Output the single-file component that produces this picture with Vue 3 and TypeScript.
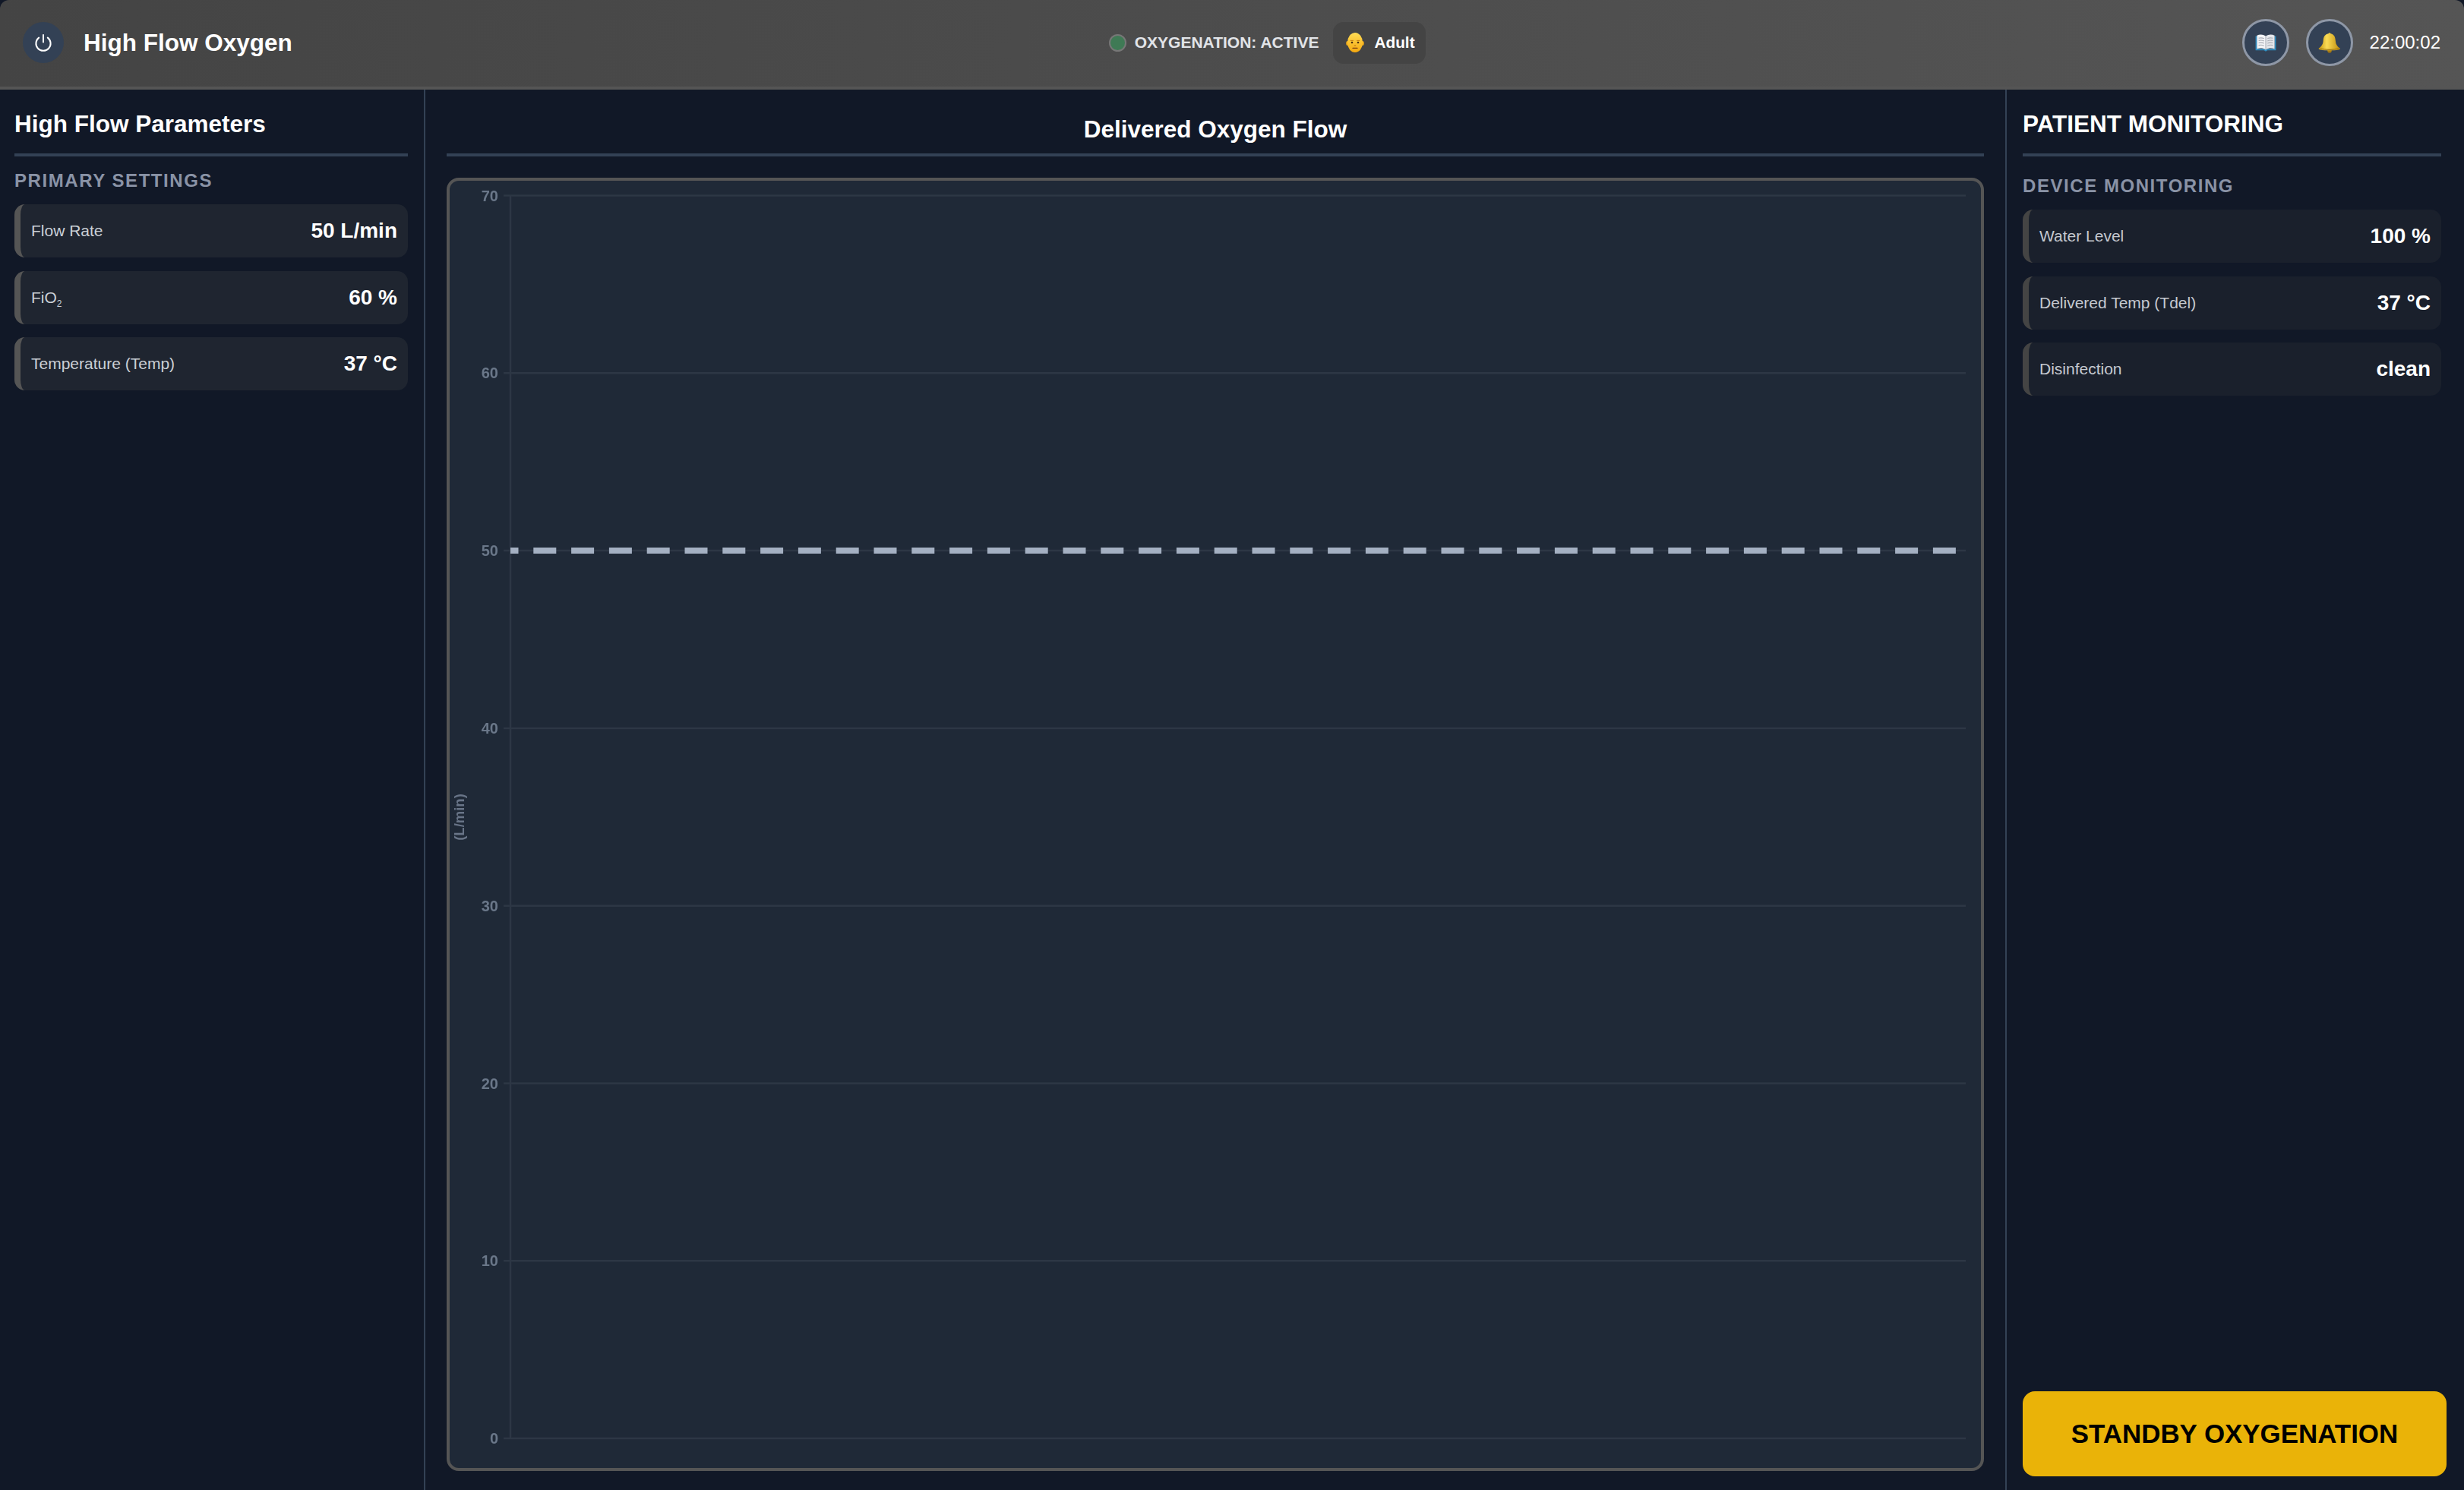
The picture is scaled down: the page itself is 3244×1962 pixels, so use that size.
<script setup lang="ts">
// High flow oxygen screen: header, parameter panel, flow chart, monitoring panel.
const primary = [
  { label: 'Flow Rate', value: '50 L/min' },
  { label: 'FiO', sub: '2', value: '60 %' },
  { label: 'Temperature (Temp)', value: '37 °C' },
]

const monitoring = [
  { label: 'Water Level', value: '100 %' },
  { label: 'Delivered Temp (Tdel)', value: '37 °C' },
  { label: 'Disinfection', value: 'clean' },
]

// chart geometry, in px inside the bordered chart box (box origin 592,238)
const originX = 80
const endX = 1996
const topY = 19.5
const stepY = 233.8
const ticks = [70, 60, 50, 40, 30, 20, 10, 0].map((value, i) => ({
  value,
  y: topY + i * stepY,
}))
const setY = topY + 2 * stepY
</script>

<template>
  <div class="screen">
    <header class="topbar">
      <div class="top-left">
        <button class="power" type="button" aria-label="Power">
          <svg width="26" height="26" viewBox="0 0 26 26" fill="none" stroke="#fff" stroke-width="2" stroke-linecap="round">
            <path d="M13 3v9.5" />
            <path d="M7.2 6.6a9.6 9.6 0 1 0 11.6 0" />
          </svg>
        </button>
        <h1>High Flow Oxygen</h1>
      </div>

      <div class="top-center">
        <span class="dot" />
        <span class="status">OXYGENATION: ACTIVE</span>
        <div class="chip">
          <svg width="24" height="27" viewBox="0 0 24 27">
            <defs>
              <linearGradient id="face" x1="0" y1="0" x2="0" y2="1">
                <stop offset="0" stop-color="#ffdc55" />
                <stop offset="1" stop-color="#f5a80f" />
              </linearGradient>
            </defs>
            <ellipse cx="2.2" cy="14" rx="2" ry="3" fill="#f0ac1c" />
            <ellipse cx="21.8" cy="14" rx="2" ry="3" fill="#f0ac1c" />
            <ellipse cx="12" cy="13" rx="10" ry="13" fill="url(#face)" />
            <circle cx="8" cy="13" r="1.3" fill="#4a2c10" />
            <circle cx="16" cy="13" r="1.3" fill="#4a2c10" />
            <path d="M5.8 10.4h4M14.2 10.4h4" stroke="#c27a12" stroke-width="1" />
            <path d="M10.8 17h2.4" stroke="#b86d10" stroke-width="1" />
            <path d="M9 20.4h6" stroke="#7a3f12" stroke-width="1.2" stroke-linecap="round" />
          </svg>
          <span>Adult</span>
        </div>
      </div>

      <div class="top-right">
        <button class="round" type="button" aria-label="Manual">
          <svg width="30" height="25" viewBox="0 0 32 28">
            <path d="M1 4v21h12.5l2.5 1.6 2.5-1.6H31V4h-2v19H3V4z" fill="#2f8fc4" />
            <path d="M3 3c4-2 9-2 13 1v20c-4-2.500-9-2.500-13-1z" fill="#f3f4f6" />
            <path d="M29 3c-4-2-9-2-13 1v20c4-2.500 9-2.500 13-1z" fill="#e4e6ea" />
            <path d="M5.500 7c3-.8 5.500-.6 8 .6M5.500 10.500c3-.8 5.500-.6 8 .6M5.500 14c3-.8 5.500-.6 8 .6M5.500 17.500c3-.8 5.500-.6 8 .6M26.500 7c-3-.8-5.500-.6-8 .6M26.500 10.500c-3-.8-5.500-.6-8 .6M26.500 14c-3-.8-5.500-.6-8 .6M26.500 17.500c-3-.8-5.500-.6-8 .6" stroke="#a9adb5" stroke-width="1.200" fill="none" />
            <path d="M16 4v20" stroke="#9aa0a8" stroke-width="1" />
          </svg>
        </button>
        <button class="round" type="button" aria-label="Alarms">
          <svg width="30" height="30" viewBox="0 0 32 32">
            <defs>
              <linearGradient id="bell" x1="0" y1="0" x2="1" y2="0">
                <stop offset="0" stop-color="#c4940f" />
                <stop offset="0.38" stop-color="#fbdc55" />
                <stop offset="1" stop-color="#c08c0c" />
              </linearGradient>
            </defs>
            <circle cx="16" cy="27.500" r="3" fill="#a87a10" />
            <path d="M14.400 3.500a1.800 1.800 0 0 1 3.200 0c5 1 6.400 5 6.800 10 .3 4 1.500 7 6.100 10.500.8.800-.2 1.800-1.500 2C25 26.800 20 27 16 27s-9-.2-13.500-1C1.200 25.800.2 24.800 1 24c4.600-3.500 5.800-6.500 6.100-10.500.4-5 1.800-9 7.300-10z" fill="url(#bell)" />
            <path d="M3 24.800c8 1.500 18 1.500 26 0" stroke="#8a6308" stroke-width="1" fill="none" />
          </svg>
        </button>
        <span class="clock">22:00:02</span>
      </div>
    </header>

    <main class="layout">
      <aside class="panel panel-left">
        <h2 class="panel-title">High Flow Parameters</h2>
        <h3 class="section-title">PRIMARY SETTINGS</h3>
        <div class="cards">
          <div v-for="p in primary" :key="p.label" class="card">
            <span class="card-label">{{ p.label }}<sub v-if="p.sub">{{ p.sub }}</sub></span>
            <span class="card-value">{{ p.value }}</span>
          </div>
        </div>
      </aside>

      <section class="center">
        <h2 class="center-title">Delivered Oxygen Flow</h2>
        <div class="chart-box">
          <svg class="chart" viewBox="0 0 2016 1695" width="2016" height="1695">
            <g v-for="t in ticks" :key="t.value">
              <line :x1="originX - 9" :x2="endX" :y1="t.y" :y2="t.y" class="grid" />
              <text :x="64" :y="t.y" class="tick" text-anchor="end" dominant-baseline="central">{{ t.value }}</text>
            </g>
            <line :x1="originX" :x2="originX" :y1="topY" :y2="ticks[7].y" class="grid" />
            <text class="axis-title" text-anchor="middle" dominant-baseline="central" transform="translate(12 838) rotate(-90)">(L/min)</text>
            <line :x1="originX" :x2="endX" :y1="setY" :y2="setY" class="setline" />
          </svg>
        </div>
      </section>

      <aside class="panel panel-right">
        <h2 class="panel-title">PATIENT MONITORING</h2>
        <h3 class="section-title section-right">DEVICE MONITORING</h3>
        <div class="cards">
          <div v-for="m in monitoring" :key="m.label" class="card card-dim">
            <span class="card-label">{{ m.label }}</span>
            <span class="card-value">{{ m.value }}</span>
          </div>
        </div>
        <button class="standby" type="button">STANDBY OXYGENATION</button>
      </aside>
    </main>
  </div>
</template>

<style scoped>
.screen {
  width: 3244px;
  height: 1962px;
  display: flex;
  flex-direction: column;
  overflow: hidden;
  background: #111827;
  color: #fff;
  font-family: "Liberation Sans", Arial, sans-serif;
}

.topbar {
  height: 118px;
  box-sizing: border-box;
  flex: none;
  display: flex;
  justify-content: space-between;
  align-items: center;
  padding: 0 31px 2px 30px;
  background: linear-gradient(90deg, #444444, #555555);
  border-bottom: 4px solid #555555;
  border-radius: 12px 12px 0 0;
}
.top-left { display: flex; align-items: center; gap: 26px; }
.top-center { display: flex; align-items: center; }
.top-right { display: flex; align-items: center; gap: 22px; }

.power {
  width: 54px;
  height: 54px;
  padding: 0;
  border: none;
  border-radius: 50%;
  background: #334155;
  display: flex;
  align-items: center;
  justify-content: center;
}
h1 {
  margin: 0;
  font-size: 31.5px;
  font-weight: 700;
  color: #fff;
}

.dot {
  width: 23px;
  height: 23px;
  box-sizing: border-box;
  border-radius: 50%;
  background: #3f7a55;
  border: 2px solid #777;
  margin-right: 11px;
}
.status {
  font-size: 21px;
  font-weight: 700;
  color: #e2e4e8;
  margin-right: 19px;
}
.chip {
  height: 55px;
  box-sizing: border-box;
  padding: 0 14px 0 17px;
  display: flex;
  align-items: center;
  gap: 13px;
  background: #444444;
  border-radius: 14px;
  font-size: 20.8px;
  font-weight: 700;
}

.round {
  width: 62px;
  height: 62px;
  box-sizing: border-box;
  padding: 0;
  border: 3px solid #8e97a6;
  border-radius: 50%;
  background: #334155;
  display: flex;
  align-items: center;
  justify-content: center;
}
.clock { font-size: 24px; color: #fff; }

.layout {
  flex: 1;
  min-height: 0;
  display: grid;
  grid-template-columns: 560px 1fr 604px;
}

.panel {
  box-sizing: border-box;
  padding: 28px 19px 0;
  display: flex;
  flex-direction: column;
  min-height: 0;
}
.panel-left { border-right: 2px solid #334155; padding-right: 21px; }
.panel-right { border-left: 2px solid #334155; padding: 28px 30px 18px 21px; }

.panel-title {
  margin: 0;
  height: 60px;
  box-sizing: border-box;
  line-height: 34px;
  font-size: 31.5px;
  font-weight: 700;
  border-bottom: 4px solid #334155;
}
.section-title {
  margin: 19px 0 19px;
  font-size: 24px;
  line-height: 25px;
  font-weight: 700;
  letter-spacing: 1.56px;
  color: #8a93a6;
}
.section-right { margin: 26px 0 19px; }

.cards { display: flex; flex-direction: column; gap: 17.5px; }
.card {
  height: 70px;
  box-sizing: border-box;
  padding: 0 14px 0 14px;
  display: flex;
  align-items: center;
  justify-content: space-between;
  background: #1f2530;
  border-left: 8px solid #555555;
  border-radius: 14px;
}
.card-dim { background: #1a202c; border-left-color: #444444; }
.card-label { font-size: 21px; color: #cbd0d6; }
.card-dim .card-label { color: #c5c9d0; }
.card-label sub { font-size: 12px; line-height: 0; }
.card-value { font-size: 28px; font-weight: 700; color: #fff; }

.standby {
  margin-top: auto;
  margin-right: -7px;
  height: 112px;
  flex: none;
  border: none;
  border-radius: 16px;
  background: #eab308;
  color: #000;
  font-family: inherit;
  font-size: 34.9px;
  font-weight: 700;
}

.center {
  box-sizing: border-box;
  padding: 28px 28px 25px;
  display: flex;
  flex-direction: column;
  min-width: 0;
}
.center-title {
  margin: 0;
  height: 60px;
  box-sizing: border-box;
  line-height: 48px;
  text-align: center;
  font-size: 31.5px;
  font-weight: 700;
  border-bottom: 4px solid #334155;
}
.chart-box {
  flex: 1;
  min-height: 0;
  margin-top: 28px;
  box-sizing: border-box;
  border: 4px solid #555555;
  border-radius: 16px;
  background: #1f2937;
  overflow: hidden;
}
.chart { display: block; filter: blur(0.5px); }
.grid { stroke: #2d3745; stroke-width: 2.5; }
.tick { font-size: 20px; font-weight: 700; fill: #6a7789; }
.axis-title { font-size: 18.5px; font-weight: 700; fill: #687487; }
.setline {
  stroke: #a4b0c2;
  stroke-width: 8;
  stroke-dasharray: 30 19.8;
  stroke-dashoffset: 19.5;
}
</style>

<style>
html, body { margin: 0; background: #111827; }
</style>
